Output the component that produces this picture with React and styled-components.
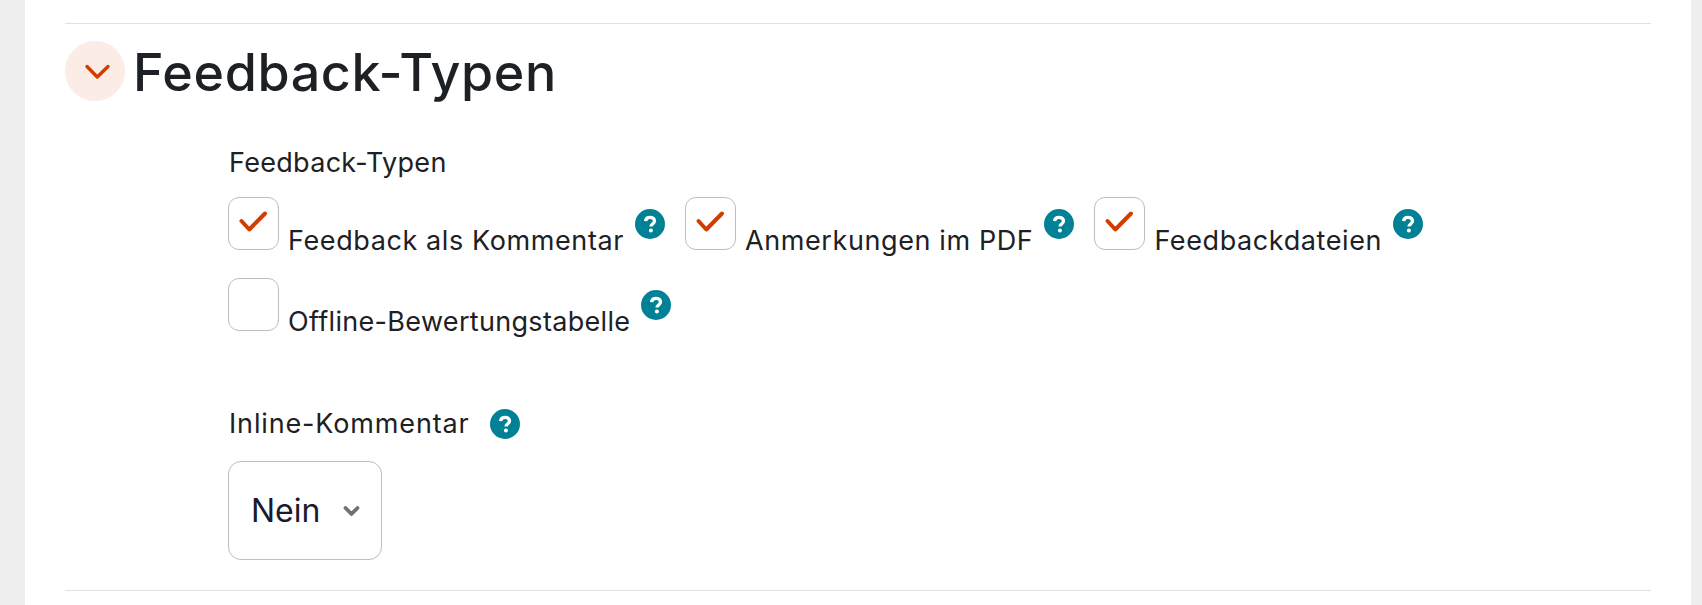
import React from 'react';
import styled, { createGlobalStyle } from 'styled-components';

const GlobalStyle = createGlobalStyle`
  html, body {
    margin: 0;
    padding: 0;
    background: #eeeeee;
  }
  body {
    font-family: Inter, "Liberation Sans", sans-serif;
    color: #1d2125;
  }
`;

const Page = styled.div`
  height: 605px;
  box-sizing: border-box;
  margin: 0 11px 0 25px;
  padding: 23px 40px 0;
  background: #fff;
  overflow: hidden;
`;

const Section = styled.section`
  border-top: 1px solid #dee2e6;
  border-bottom: 1px solid #dee2e6;
  height: 568px;
  box-sizing: border-box;
`;

const Header = styled.div`
  display: flex;
  align-items: center;
  gap: 8px;
  margin-top: 17px;
`;

const Toggle = styled.button`
  width: 60px;
  height: 60px;
  padding: 0;
  border: none;
  border-radius: 50%;
  background: #fbece6;
  color: #d33c00;
  display: block;
`;

const Title = styled.h3`
  margin: 0 0 -2px;
  padding-top: 2px;
  font-size: 52px;
  line-height: 60px;
  font-weight: 500;
  letter-spacing: 0.6px;
  color: #1d2125;
`;

const Form = styled.div`
  margin-left: 163px;
  padding-top: 46px;
`;

const FieldLabel = styled.div`
  display: flex;
  align-items: center;
  gap: 20px;
  font-size: 27px;
  line-height: 32px;
  letter-spacing: ${(props) => props.$spacing || '0.3px'};
  padding-left: 1px;
`;

const CheckGroup = styled.div`
  display: flex;
  flex-wrap: wrap;
  column-gap: 20px;
  row-gap: 28px;
  margin-top: 18px;
`;

const CheckItem = styled.label`
  display: flex;
  align-items: flex-end;
`;

const Box = styled.span`
  width: 51px;
  height: 53px;
  box-sizing: border-box;
  border: 1px solid #bcbec2;
  border-radius: 11px;
  background: #fff;
  color: #d33c00;
  margin-right: 9px;
  display: block;
`;

const CheckText = styled.span`
  font-size: 27px;
  line-height: 32px;
  letter-spacing: ${(props) => props.$spacing || '0.6px'};
  color: #1d2125;
  margin-bottom: -7px;
`;

const HelpSvg = styled.svg`
  width: 30px;
  height: 30px;
  color: #008196;
  display: block;
  flex: none;
  align-self: ${(props) => (props.$inline ? 'center' : 'flex-start')};
  margin: ${(props) => (props.$inline ? '0' : '12px 0 0 11px')};
`;

const Select = styled.div`
  width: 154px;
  height: 99px;
  box-sizing: border-box;
  margin-top: 21px;
  border: 1px solid #bcbec2;
  border-radius: 13px;
  display: flex;
  align-items: center;
  padding-left: 22px;
  gap: 23px;
  font-size: 32px;
  color: #1a1a2e;
`;

const InlineField = styled.div`
  margin-top: 77px;
`;

const Chevron = () => (
  <svg width="60" height="60" viewBox="0 0 60 60" fill="none" stroke="currentColor" strokeWidth="3.4" strokeLinecap="round" strokeLinejoin="round" style={{ display: 'block' }}>
    <polyline points="22,25.5 32.3,36 43,25.5" />
  </svg>
);

const Check = () => (
  <svg width="49" height="51" viewBox="1 1 49 51" fill="none" stroke="currentColor" strokeWidth="4" strokeLinecap="round" strokeLinejoin="round" style={{ display: 'block' }}>
    <polyline points="13.5,24 21.3,32.5 37,16.5" />
  </svg>
);

const SelectArrow = () => (
  <svg width="17" height="10" viewBox="0 0 17 10" fill="none" stroke="#6a737b" strokeWidth="3.8" strokeLinecap="round" strokeLinejoin="round">
    <polyline points="2.5,2 8.5,8 14.5,2" />
  </svg>
);

const Help = ({ inline }) => (
  <HelpSvg $inline={inline} viewBox="0 0 30 30">
    <circle cx="15" cy="15" r="15" fill="currentColor" />
    <path d="M10.6 12.2c.2-2.5 2.1-3.9 4.5-3.9 2.5 0 4.4 1.5 4.4 3.6 0 3.1-3.5 3-3.5 5.6" fill="none" stroke="#fff" strokeWidth="3.3" strokeLinecap="butt" />
    <circle cx="15.9" cy="21.6" r="2" fill="#fff" />
  </HelpSvg>
);

const options = [
  { text: 'Feedback als Kommentar', checked: true },
  { text: 'Anmerkungen im PDF', checked: true },
  { text: 'Feedbackdateien', checked: true },
  { text: 'Offline-Bewertungstabelle', checked: false, spacing: '0.32px' },
];

export default function App() {
  return (
    <>
      <GlobalStyle />
      <Page>
        <Section>
          <Header>
            <Toggle>
              <Chevron />
            </Toggle>
            <Title>Feedback-Typen</Title>
          </Header>
          <Form>
            <FieldLabel>Feedback-Typen</FieldLabel>
            <CheckGroup>
              {options.map((o) => (
                <CheckItem key={o.text}>
                  <Box>{o.checked && <Check />}</Box>
                  <CheckText $spacing={o.spacing}>{o.text}</CheckText>
                  <Help />
                </CheckItem>
              ))}
            </CheckGroup>
            <InlineField>
              <FieldLabel $spacing="0.85px">
                Inline-Kommentar
                <Help inline />
              </FieldLabel>
              <Select>
                Nein
                <SelectArrow />
              </Select>
            </InlineField>
          </Form>
        </Section>
      </Page>
    </>
  );
}
